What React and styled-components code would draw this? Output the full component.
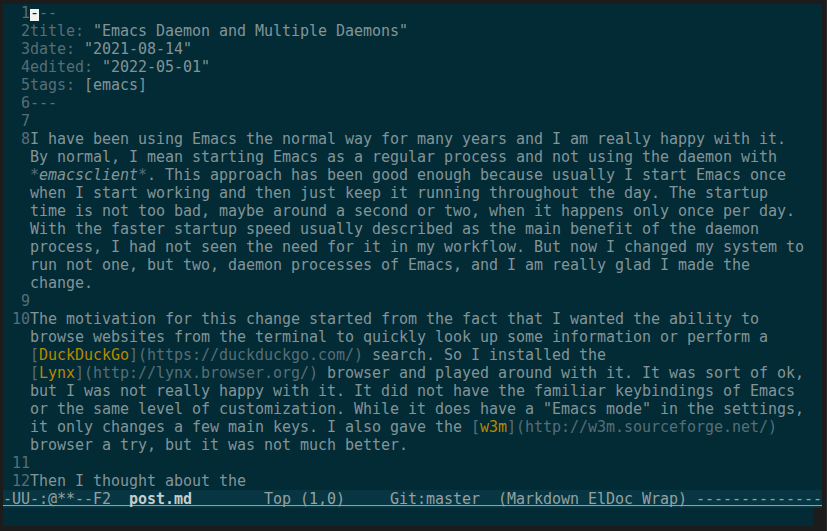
import React from "react";
import styled, { createGlobalStyle } from "styled-components";

const GlobalStyle = createGlobalStyle`
	html, body {
		margin: 0;
		padding: 0;
		background: #1c1c1c;
	}
`;

// each logical line: number + visual rows, each row a list of [tone, text]
const lines = [
	{ n: 1, rows: [[["cursor", "-"], ["dim", "--"]]] },
	{ n: 2, rows: [[["dim", "title: "], ["text", '"Emacs Daemon and Multiple Daemons"']]] },
	{ n: 3, rows: [[["dim", "date: "], ["text", '"2021-08-14"']]] },
	{ n: 4, rows: [[["dim", "edited: "], ["text", '"2022-05-01"']]] },
	{ n: 5, rows: [[["dim", "tags: "], ["text", "[emacs]"]]] },
	{ n: 6, rows: [[["dim", "---"]]] },
	{ n: 7, rows: [[]] },
	{
		n: 8,
		rows: [
			[["text", "I have been using Emacs the normal way for many years and I am really happy with it."]],
			[["text", "By normal, I mean starting Emacs as a regular process and not using the daemon with"]],
			[
				["dim", "*"],
				["em", "emacsclient"],
				["dim", "*"],
				["text", ". This approach has been good enough because usually I start Emacs once"],
			],
			[["text", "when I start working and then just keep it running throughout the day. The startup"]],
			[["text", "time is not too bad, maybe around a second or two, when it happens only once per day."]],
			[["text", "With the faster startup speed usually described as the main benefit of the daemon"]],
			[["text", "process, I had not seen the need for it in my workflow. But now I changed my system to"]],
			[["text", "run not one, but two, daemon processes of Emacs, and I am really glad I made the"]],
			[["text", "change."]],
		],
	},
	{ n: 9, rows: [[]] },
	{
		n: 10,
		rows: [
			[["text", "The motivation for this change started from the fact that I wanted the ability to"]],
			[["text", "browse websites from the terminal to quickly look up some information or perform a"]],
			[
				["dim", "["],
				["link", "DuckDuckGo"],
				["dim", "](https://duckduckgo.com/)"],
				["text", " search. So I installed the"],
			],
			[
				["dim", "["],
				["link", "Lynx"],
				["dim", "](http://lynx.browser.org/)"],
				["text", " browser and played around with it. It was sort of ok,"],
			],
			[["text", "but I was not really happy with it. It did not have the familiar keybindings of Emacs"]],
			[["text", 'or the same level of customization. While it does have a "Emacs mode" in the settings,']],
			[
				["text", "it only changes a few main keys. I also gave the "],
				["dim", "["],
				["link", "w3m"],
				["dim", "](http://w3m.sourceforge.net/)"],
			],
			[["text", "browser a try, but it was not much better."]],
		],
	},
	{ n: 11, rows: [[]] },
	{ n: 12, rows: [[["text", "Then I thought about the"]]] },
];

const App = () => {
	return (
		<>
			<GlobalStyle />
			<Frame>
				<Buffer>
					{lines.map((line) =>
						line.rows.map((row, i) => (
							<Row key={`${line.n}-${i}`}>
								<Num>{i === 0 ? line.n : ""}</Num>
								<Text>
									{row.map(([tone, text], j) =>
										tone === "cursor" ? (
											<Cursor key={j}>{text}</Cursor>
										) : (
											<Seg key={j} $tone={tone}>
												{text}
											</Seg>
										)
									)}
								</Text>
							</Row>
						))
					)}
				</Buffer>
				<ModeLine>
					{"-UU-:@**--F2  "}
					<b>post.md</b>
					{"        Top (1,0)     Git:master  (Markdown ElDoc Wrap) --------------"}
				</ModeLine>
				<MiniBuffer />
			</Frame>
		</>
	);
};

const Frame = styled.div`
	box-sizing: border-box;
	height: 531px;
	width: 827px;
	padding: 4px 4px 5px 3px;
	border-right: 1px solid #2a2a2a;
	background: #1c1c1c;
	display: flex;
	flex-direction: column;
	font-family: "DejaVu Sans Mono", "Liberation Mono", monospace;
	font-size: 15px;
	letter-spacing: -0.03px;
	line-height: 18px;
	white-space: pre;
`;

const Buffer = styled.div`
	display: flex;
	flex-direction: column;
	height: 486px;
	padding-left: 9px;
	background: #022b36;
	color: #839496;
`;

const Row = styled.div`
	display: flex;
	height: 18px;
`;

const Num = styled.span`
	width: 18px;
	text-align: right;
	color: #586e75;
`;

const Text = styled.span`
	flex: 1;
`;

const tones = {
	text: "#839496",
	dim: "#586e75",
	link: "#b58900",
	em: "#839496",
};

const Seg = styled.span`
	color: ${(p) => tones[p.$tone]};
	font-style: ${(p) => (p.$tone === "em" ? "italic" : "normal")};
`;

// block cursor: white box on the lower part of the row
const Cursor = styled.span`
	display: inline-block;
	width: 9px;
	vertical-align: top;
	background: linear-gradient(
		transparent 5px,
		#f2f2f2 5px,
		#f2f2f2 17px,
		transparent 17px
	);
	color: #022b36;
`;

const ModeLine = styled.div`
	height: 18px;
	background: #073642;
	color: #93a1a1;
	text-decoration: underline;
	text-underline-offset: 1px;
	text-decoration-skip-ink: none;
	overflow: hidden;
	b {
		color: #c5cdcd;
	}
`;

const MiniBuffer = styled.div`
	height: 18px;
	margin-right: 9px;
	background: #022b36;
`;

export default App;
